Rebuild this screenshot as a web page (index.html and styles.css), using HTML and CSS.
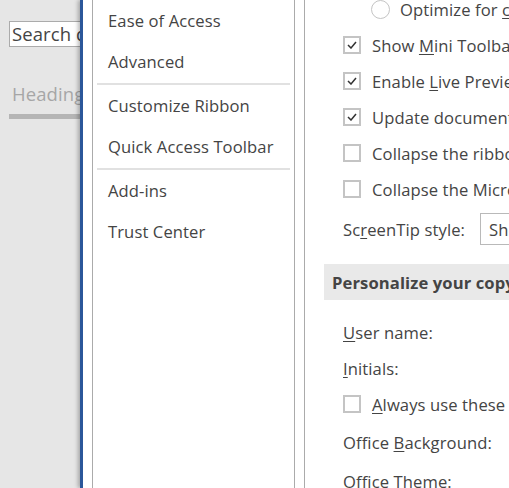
FILE: index.html
```html
<!DOCTYPE html>
<html>
<head>
<meta charset="utf-8">
<link rel="stylesheet" href="styles.css">
</head>
<body>
<div class="screen">
  <aside class="doc-pane">
    <div class="search">Search document</div>
    <div class="tabs"><span class="tab">Headings</span></div>
    <div class="tab-bar"></div>
  </aside>
  <div class="dialog">
    <nav class="nav">
      <div class="nav-item">Ease of Access</div>
      <div class="nav-item">Advanced</div>
      <div class="nav-sep"></div>
      <div class="nav-item">Customize Ribbon</div>
      <div class="nav-item">Quick Access Toolbar</div>
      <div class="nav-sep"></div>
      <div class="nav-item">Add-ins</div>
      <div class="nav-item">Trust Center</div>
    </nav>
    <main class="content">
      <div class="scroller">
        <div class="row sub"><span class="radio"></span><span class="label">Optimize for <u>c</u>ompatibility (application restart required)</span></div>
        <div class="row"><span class="check on"><svg width="10" height="8" viewBox="0 0 10 8"><polyline points="1,4 4,7 9,1" fill="none" stroke="#333" stroke-width="1.5"/></svg></span><span class="label">Show <u>M</u>ini Toolbar on selection</span></div>
        <div class="row"><span class="check on"><svg width="10" height="8" viewBox="0 0 10 8"><polyline points="1,4 4,7 9,1" fill="none" stroke="#333" stroke-width="1.5"/></svg></span><span class="label">Enable <u>L</u>ive Preview</span></div>
        <div class="row"><span class="check on"><svg width="10" height="8" viewBox="0 0 10 8"><polyline points="1,4 4,7 9,1" fill="none" stroke="#333" stroke-width="1.5"/></svg></span><span class="label">Update document content while dragging</span></div>
        <div class="row"><span class="check"></span><span class="label">Collapse the ribbon automatically</span></div>
        <div class="row"><span class="check"></span><span class="label">Collapse the Microsoft Search box by default</span></div>
        <div class="row tip-row"><span class="tip-label">Sc<u>r</u>eenTip style:</span><span class="select">Show feature descriptions in ScreenTips</span></div>
        <div class="section-head">Personalize your copy of Microsoft Office</div>
        <div class="row"><span class="label"><u>U</u>ser name:</span></div>
        <div class="row"><span class="label"><u>I</u>nitials:</span></div>
        <div class="row"><span class="check"></span><span class="label"><u>A</u>lways use these values regardless of sign in to Office.</span></div>
        <div class="row tall"><span class="label">Office <u>B</u>ackground:</span></div>
        <div class="row"><span class="label">Office Theme:</span></div>
      </div>
    </main>
  </div>
</div>
</body>
</html>
```

FILE: styles.css
```css
* { box-sizing: border-box; }
html, body { margin: 0; padding: 0; background: #fff; }
body {
  font-family: "Open Sans", "Noto Sans", sans-serif;
  font-size: 16.6px;
  letter-spacing: 0.1px;
  color: #444;
}
.screen {
  display: flex;
  width: 509px;
  height: 488px;
  overflow: hidden;
}
.doc-pane {
  flex: none;
  width: 80px;
  background: #e6e6e6;
  overflow: hidden;
  padding: 21px 0 0 9px;
}
.search {
  width: 220px;
  height: 26px;
  background: #fff;
  border: 1px solid #ababab;
  padding-left: 2px;
  font-size: 18.5px;
  line-height: 24px;
  color: #444;
  white-space: nowrap;
}
.tabs {
  margin-top: 33px;
  height: 28px;
  line-height: 28px;
  font-size: 18.5px;
  color: #a6a6a6;
  padding-left: 3px;
  white-space: nowrap;
}
.tab-bar {
  margin-top: 6px;
  width: 220px;
  height: 5px;
  background: #b5b5b5;
}
.dialog {
  position: relative;
  flex: 1;
  display: flex;
  background: #fff;
  border-left: 3px solid #2b579a;
  box-shadow: -2px 0 4px rgba(0, 0, 0, 0.28);
  padding-left: 9px;
  min-width: 0;
}
.nav {
  flex: none;
  width: 203px;
  border-left: 1px solid #ababab;
  border-right: 1px solid #ababab;
}
.nav-item {
  height: 41px;
  display: flex;
  align-items: center;
  padding-left: 15px;
  white-space: nowrap;
}
.nav-sep {
  height: 2px;
  margin: 1px 4px 0 4px;
  background: #e1e1e1;
}
.content {
  flex: 1;
  margin-left: 9px;
  border-left: 1px solid #ababab;
  overflow: hidden;
  min-width: 0;
}
.scroller {
  margin-top: -9px;
}
.row {
  height: 36px;
  display: flex;
  align-items: center;
  padding-left: 38px;
  white-space: nowrap;
}
.row.sub { padding-left: 66px; }
.row.tall { height: 41px; }
.check {
  flex: none;
  width: 18px;
  height: 18px;
  border: 2px solid #c4c4c4;
  margin-right: 11px;
  display: flex;
  align-items: center;
  justify-content: center;
}
.radio {
  flex: none;
  width: 19px;
  height: 19px;
  border: 1.5px solid #c4c4c4;
  border-radius: 50%;
  margin-right: 10px;
}
u {
  text-decoration-thickness: 1px;
  text-underline-offset: 2px;
}
.tip-row { height: 44px; }
.tip-label {
  flex: none;
  width: 137px;
}
.select {
  flex: none;
  height: 32px;
  border: 1px solid #b9b9b9;
  padding-left: 8px;
  display: flex;
  align-items: center;
}
.section-head {
  margin: 13px 0 14px 19px;
  height: 36px;
  background: #e9e9e9;
  padding-left: 8px;
  display: flex;
  align-items: center;
  font-weight: bold;
  white-space: nowrap;
}
```
